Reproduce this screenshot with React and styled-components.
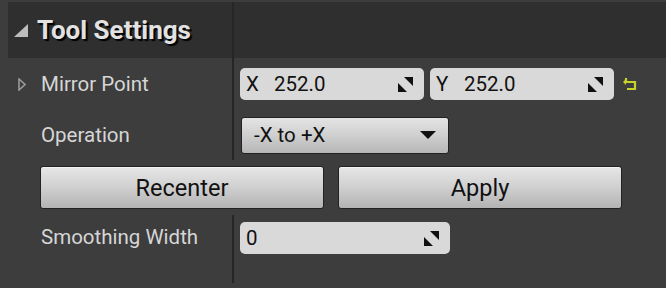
import React from "react";
import styled, { createGlobalStyle } from "styled-components";

const GlobalStyle = createGlobalStyle`
  html, body {
    margin: 0;
    padding: 0;
    background: #3d3d3d;
  }
  body {
    font-family: Roboto, "Liberation Sans", sans-serif;
  }
`;

const Panel = styled.div`
  width: 666px;
  height: 288px;
  padding-top: 2px;
  box-sizing: border-box;
  background: #3d3d3d;
  overflow: hidden;
`;

const Header = styled.div`
  margin-left: 8px;
  height: 56px;
  background: #2f2f2f;
  display: grid;
  grid-template-columns: 224px 2px 1fr;
`;

const HeaderTitle = styled.div`
  display: flex;
  align-items: center;
  gap: 9px;
  padding-left: 6px;
  color: #e2e2e2;
  font-size: 26px;
  font-weight: 700;
  text-shadow: 2px 2px 1px #000;
`;

const Splitter = styled.div`
  background: #262626;
`;

const Row = styled.div`
  display: grid;
  grid-template-columns: 232px 2px 1fr;
  height: ${(p) => p.$h}px;
`;

const LabelCell = styled.div`
  display: flex;
  align-items: ${(p) => (p.$top ? "flex-start" : "center")};
  padding-top: ${(p) => (p.$top ? "10px" : "0")};
  padding-left: 18px;
  gap: 10px;
  color: #d6d6d6;
  font-size: 20.5px;
`;

const ExpanderSlot = styled.div`
  width: 13px;
  display: flex;
  align-items: center;
`;

const ValueCell = styled.div`
  display: flex;
  align-items: ${(p) => (p.$top ? "flex-start" : "center")};
  padding-top: ${(p) => (p.$top ? "7px" : "0")};
  padding-left: 6px;
  gap: 6px;
`;

const NumberBox = styled.div`
  width: ${(p) => p.$w}px;
  height: 32px;
  box-sizing: border-box;
  background: #d9d9d9;
  border-radius: 5px;
  display: flex;
  align-items: center;
  padding: 0 10px 0 6px;
  color: #111;
  font-size: 20.5px;
`;

const AxisLabel = styled.span`
  width: 28px;
`;

const NumberValue = styled.span`
  flex: 1;
`;

const Combo = styled.div`
  width: 208px;
  height: 37px;
  box-sizing: border-box;
  border: 1px solid #222;
  border-radius: 3px;
  background: linear-gradient(#e4e4e4, #cfcfcf 50%, #b6b6b6);
  display: flex;
  align-items: center;
  padding: 0 12px 0 12px;
  color: #111;
  font-size: 20.5px;
  margin-left: 1px;
`;

const ComboText = styled.span`
  flex: 1;
`;

const ButtonRow = styled.div`
  height: 55px;
  display: flex;
  align-items: center;
  gap: 14px;
  padding-left: 40px;
`;

const Button = styled.div`
  width: 284px;
  height: 43px;
  box-sizing: border-box;
  border: 1px solid #222;
  border-radius: 3px;
  background: linear-gradient(#e6e6e6, #d2d2d2 45%, #b3b3b3);
  box-shadow: inset 0 1px 0 #f2f2f2;
  display: flex;
  align-items: center;
  justify-content: center;
  color: #111;
  font-size: 23.5px;
`;

const SpinIcon = () => (
  <svg width="17" height="17" viewBox="0 0 17 17">
    <polygon points="7,1 16,1 16,10" fill="#111" />
    <polygon points="1,7 1,16 10,16" fill="#111" />
  </svg>
);

const ResetIcon = () => (
  <svg width="17" height="17" viewBox="0 0 17 17" style={{ marginLeft: 2 }}>
    <path
      d="M4 2 V6 H13 V13 H5"
      fill="none"
      stroke="#c9d22a"
      strokeWidth="2.2"
    />
    <polygon points="1,6 4,3 4,9" fill="#c9d22a" />
  </svg>
);

const CollapseArrow = () => (
  <svg width="14" height="13" viewBox="0 0 14 13">
    <polygon points="14,0 14,13 0,13" fill="#bdbdbd" />
  </svg>
);

const ExpandArrow = () => (
  <svg width="8" height="13" viewBox="0 0 8 13">
    <polygon
      points="1,1 7,6.5 1,12"
      fill="none"
      stroke="#9a9a9a"
      strokeWidth="1.6"
    />
  </svg>
);

const DropArrow = () => (
  <svg width="16" height="8" viewBox="0 0 16 8">
    <polygon points="0,0 16,0 8,8" fill="#111" />
  </svg>
);

export default function App() {
  return (
    <Panel>
      <GlobalStyle />
      <Header>
        <HeaderTitle>
          <CollapseArrow />
          Tool Settings
        </HeaderTitle>
        <Splitter />
        <div />
      </Header>

      <Row $h={52}>
        <LabelCell>
          <ExpanderSlot>
            <ExpandArrow />
          </ExpanderSlot>
          Mirror Point
        </LabelCell>
        <Splitter />
        <ValueCell>
          <NumberBox $w={184}>
            <AxisLabel>X</AxisLabel>
            <NumberValue>252.0</NumberValue>
            <SpinIcon />
          </NumberBox>
          <NumberBox $w={184}>
            <AxisLabel>Y</AxisLabel>
            <NumberValue>252.0</NumberValue>
            <SpinIcon />
          </NumberBox>
          <ResetIcon />
        </ValueCell>
      </Row>

      <Row $h={50}>
        <LabelCell>
          <ExpanderSlot />
          Operation
        </LabelCell>
        <Splitter />
        <ValueCell>
          <Combo>
            <ComboText>-X to +X</ComboText>
            <DropArrow />
          </Combo>
        </ValueCell>
      </Row>

      <ButtonRow>
        <Button>Recenter</Button>
        <Button>Apply</Button>
      </ButtonRow>

      <Row $h={68}>
        <LabelCell $top>
          <ExpanderSlot />
          Smoothing Width
        </LabelCell>
        <Splitter />
        <ValueCell $top>
          <NumberBox $w={210}>
            <NumberValue>0</NumberValue>
            <SpinIcon />
          </NumberBox>
        </ValueCell>
      </Row>
    </Panel>
  );
}
